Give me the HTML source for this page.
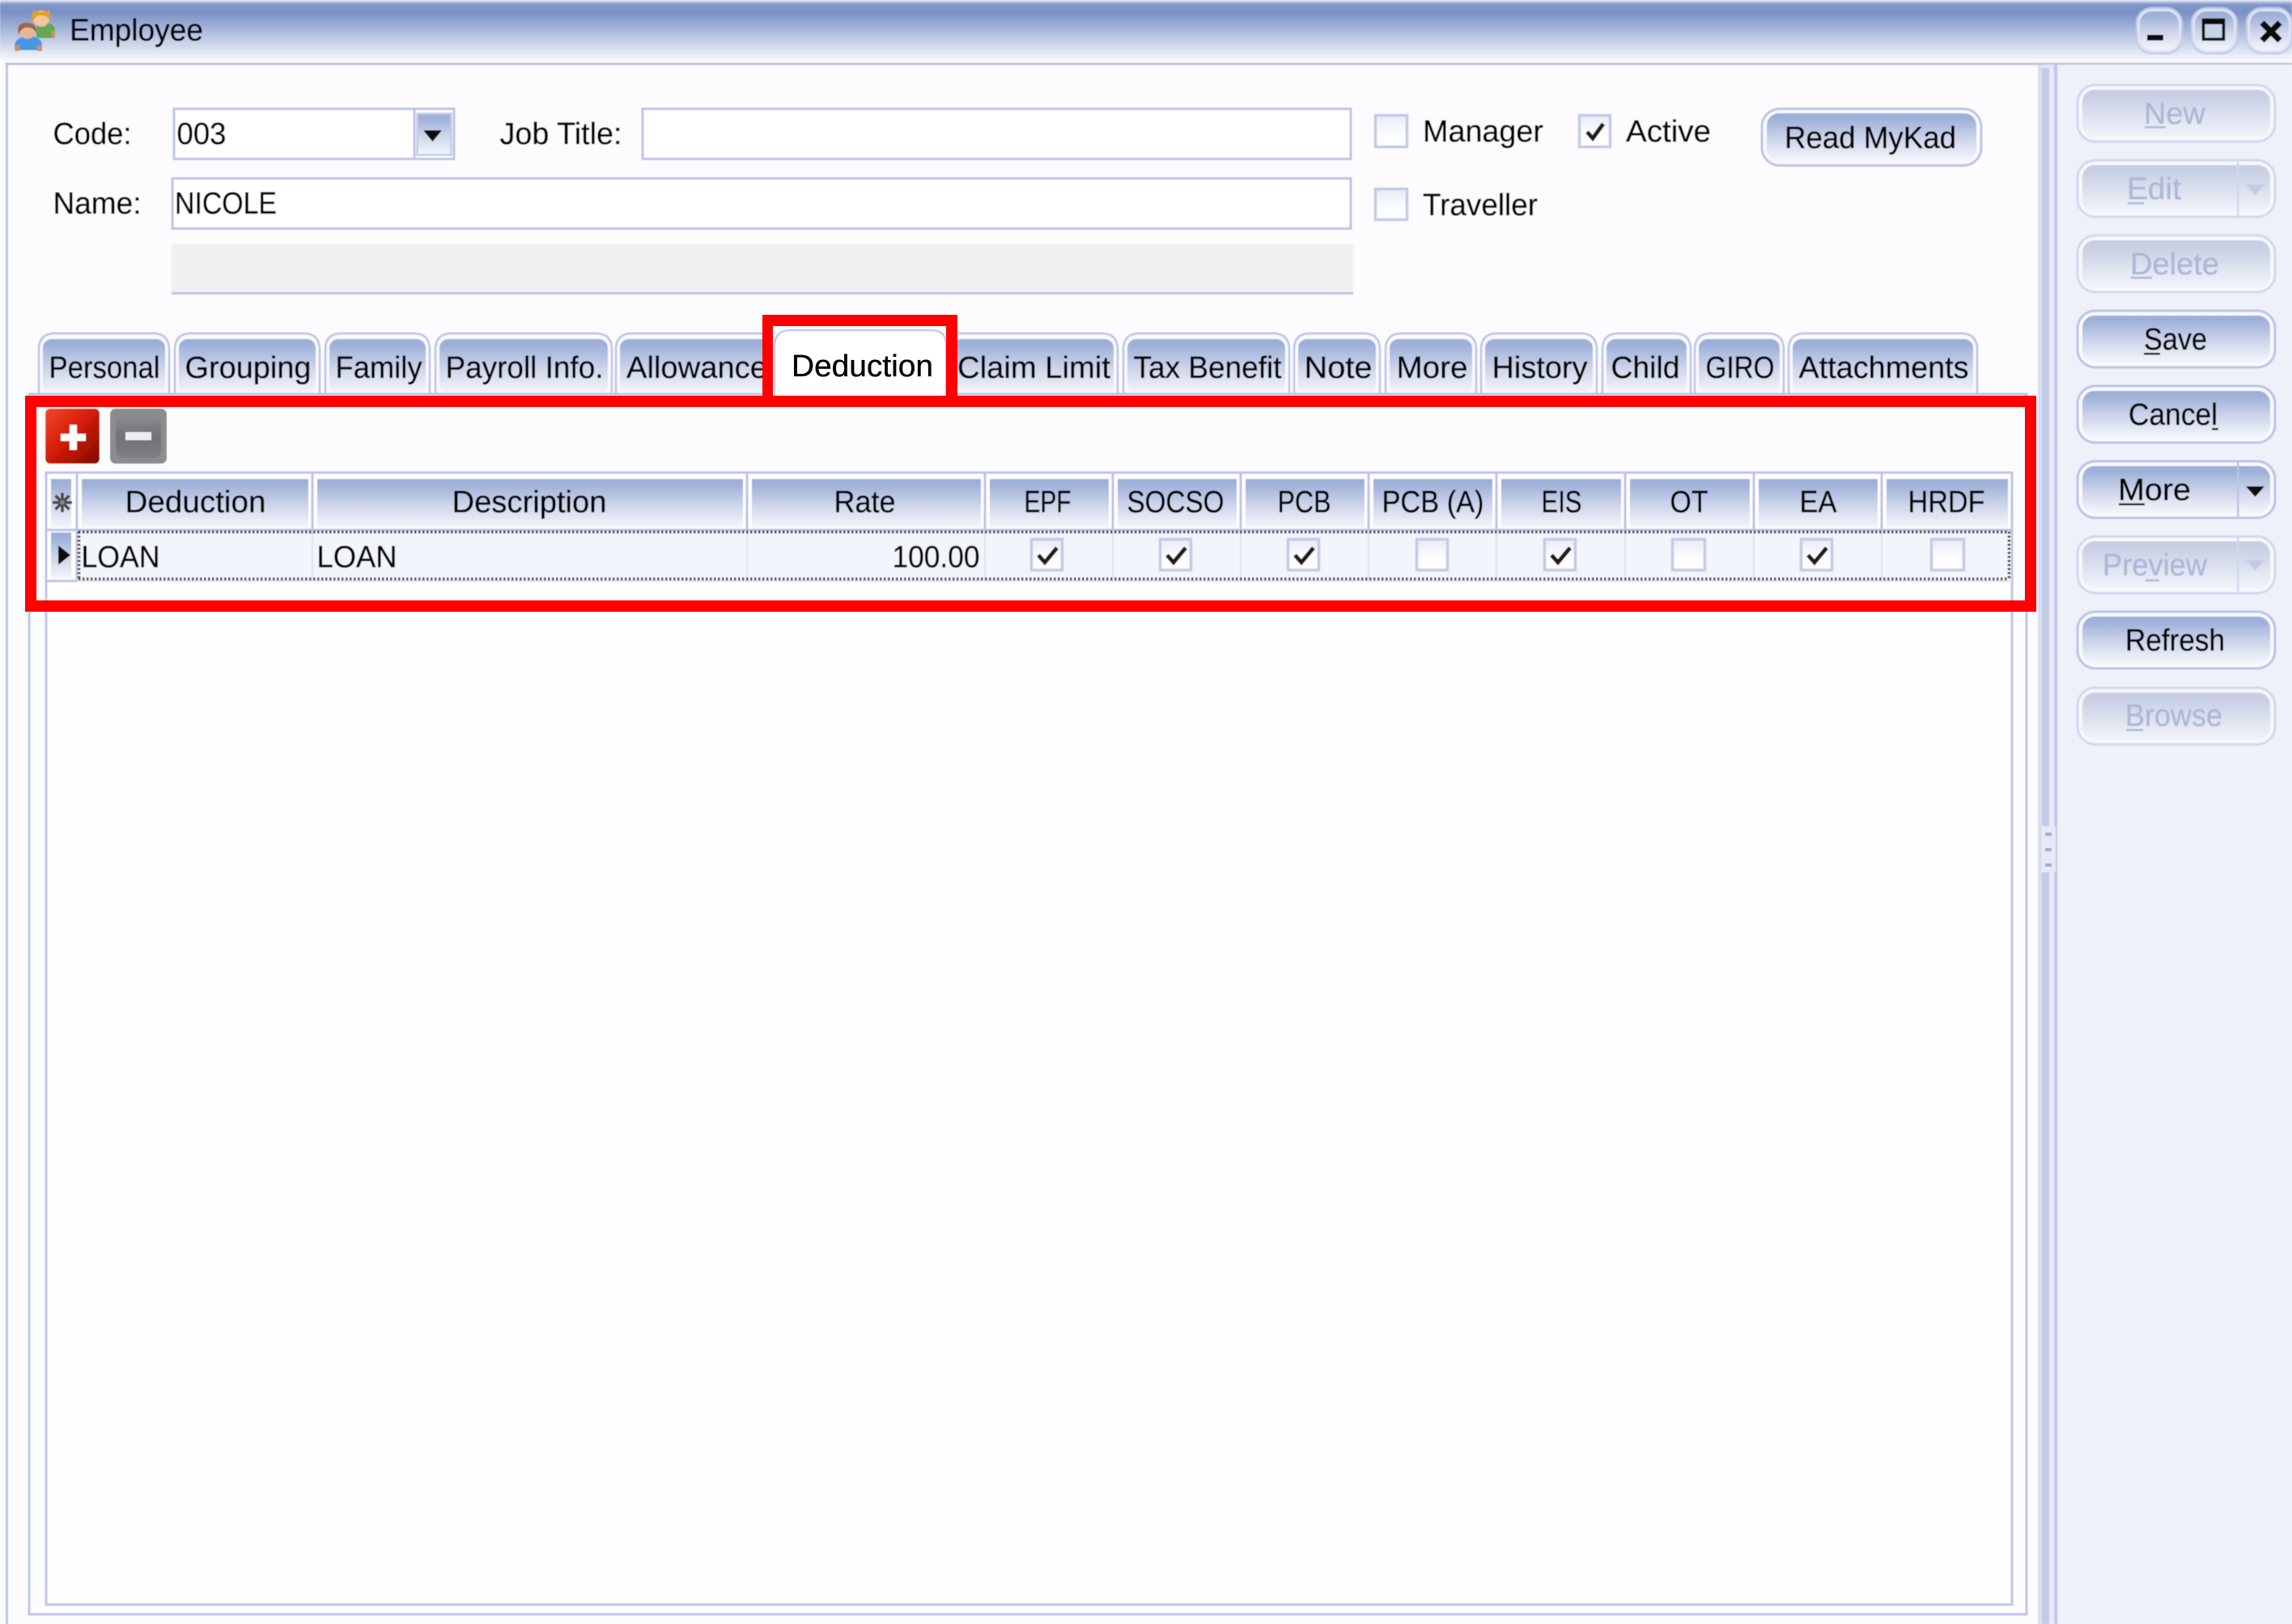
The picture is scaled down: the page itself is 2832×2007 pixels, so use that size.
<!DOCTYPE html>
<html lang="en">
<head>
<meta charset="utf-8">
<title>Employee</title>
<style>
html,body{margin:0;padding:0;background:#fcfcff;width:2832px;height:2007px;overflow:hidden}
svg{display:block}
text{font-family:"Liberation Sans",sans-serif;font-size:38px;fill:#000;stroke:#000;stroke-width:.35px}
.d{fill:#adb7d6;stroke:#adb7d6}
.c{fill:#fff;stroke:#c3cae8;stroke-width:3.5}
.k{fill:none;stroke:#1c1c1c;stroke-width:5}
.tb{fill:#f8f9fe;stroke:#bcc3e6;stroke-width:2.5}
.l{stroke:#bcc3e6;stroke-width:3;fill:none}
.f{stroke:#dde2f2;stroke-width:2;fill:none}
.dot{stroke:#333;stroke-width:3.5;stroke-dasharray:2.5 2.5;fill:none}
</style>
</head>
<body>
<svg xmlns="http://www.w3.org/2000/svg" width="2832" height="2007" viewBox="0 0 2832 2007">
<defs>
<linearGradient id="g" x1="0" y1="0" x2="0" y2="1"><stop offset="0" stop-color="#9dafd8"/><stop offset=".12" stop-color="#a0b1d9"/><stop offset=".55" stop-color="#ced6eb"/><stop offset="1" stop-color="#f4f6fb"/></linearGradient>
<linearGradient id="gd" x1="0" y1="0" x2="0" y2="1"><stop offset="0" stop-color="#c6cde2"/><stop offset=".15" stop-color="#c9d0e4"/><stop offset="1" stop-color="#f2f4fa"/></linearGradient>
<linearGradient id="tt" x1="0" y1="0" x2="0" y2="1"><stop offset="0" stop-color="#e6eaf4"/><stop offset=".07" stop-color="#8096c8"/><stop offset=".2" stop-color="#7b91c6"/><stop offset=".55" stop-color="#b5c2e0"/><stop offset=".95" stop-color="#f6f7fb"/><stop offset="1" stop-color="#fbfbfe"/></linearGradient>
<linearGradient id="cb" x1="0" y1="0" x2="0" y2="1"><stop offset="0" stop-color="#e9ecf7"/><stop offset=".6" stop-color="#fcfcff"/><stop offset="1" stop-color="#fff"/></linearGradient>
<linearGradient id="rd" x1="0" y1="0" x2="1" y2="1"><stop offset="0" stop-color="#f04a30"/><stop offset=".45" stop-color="#d81c08"/><stop offset="1" stop-color="#7e0a00"/></linearGradient>
<linearGradient id="gy" x1="0" y1="0" x2="0" y2="1"><stop offset="0" stop-color="#8b8d91"/><stop offset=".5" stop-color="#707276"/><stop offset="1" stop-color="#7e8084"/></linearGradient>
<filter id="b" x="0" y="0" width="100%" height="100%"><feGaussianBlur stdDeviation="0.55"/></filter>
<g id="bt"><rect x="2567" y="1" width="244" height="70" rx="22" fill="#f8f9fe" stroke="#bcc3e6" stroke-width="3"/><rect x="2573" y="7" width="232" height="58" rx="15" fill="url(#g)"/></g>
<g id="bd"><rect x="2567" y="1" width="244" height="70" rx="22" fill="#f6f7fc" stroke="#d2d7ee" stroke-width="3"/><rect x="2573" y="7" width="232" height="58" rx="15" fill="url(#gd)"/></g>
</defs>

<g filter="url(#b)">
<rect width="2832" height="2007" fill="#fcfcff"/>
<!-- Title bar -->
<rect width="2832" height="78" fill="url(#tt)"/>
<rect x="6" y="77.500" width="2826" height="3" fill="#bcc3e6"/>
<rect x="7" y="79" width="3" height="1928" fill="#bcc3e6"/>
<!-- Title icon -->
<path d="M45 47V34Q46 29 55 29H61Q68 31 68 38V47Z" fill="#63a94f"/>
<rect x="64" y="38" width="4" height="9" fill="#d09060"/>
<circle cx="51" cy="23" r="10" fill="#f2c79c"/>
<path d="M40 28Q38 13 44 13L50 15L60 13Q64 20 61 26Q60 19 50 19Q43 19 40 28Z" fill="#e2a11f"/>
<path d="M18 62V55Q20 47 30 45H40Q52 47 52 56V62Z" fill="#4597e8"/>
<circle cx="34" cy="38" r="10" fill="#e9b695"/>
<path d="M23 43Q19 28 33 28Q46 28 45 41Q41 33 32 34Q26 35 23 43Z" fill="#98694c"/>
<rect x="18" y="56" width="6" height="7" fill="#d09060"/><rect x="46" y="56" width="6" height="7" fill="#d09060"/>
<text x="86" y="50" textLength="165" lengthAdjust="spacingAndGlyphs">Employee</text>

<!-- Window controls -->
<rect x="2640" y="10" width="56" height="56" rx="19" fill="#dfe4f2" stroke="#c5cbe8" stroke-width="2.500"/>
<rect x="2708" y="10" width="56" height="56" rx="19" fill="#dfe4f2" stroke="#c5cbe8" stroke-width="2.500"/>
<rect x="2776" y="10" width="56" height="56" rx="19" fill="#dfe4f2" stroke="#c5cbe8" stroke-width="2.500"/>
<rect x="2644" y="14" width="48" height="48" rx="15" fill="url(#g)"/>
<rect x="2712" y="14" width="48" height="48" rx="15" fill="url(#g)"/>
<rect x="2780" y="14" width="48" height="48" rx="15" fill="url(#g)"/>
<rect x="2653" y="43" width="20" height="7" fill="#111"/>
<rect x="2722.500" y="24.500" width="25" height="24" fill="#c6d1ea" stroke="#111" stroke-width="3.500"/>
<rect x="2721" y="23" width="28" height="7" fill="#111"/>
<path d="M2795 28L2817 50M2817 28L2795 50" stroke="#111" stroke-width="7.500" fill="none"/>

<!-- Fields -->
<rect x="215" y="134.500" width="346" height="62" fill="#fff" stroke="#bcc3e6" stroke-width="3"/>
<path d="M512 134V197" class="l"/>
<rect x="515.500" y="140.500" width="42" height="51" fill="url(#g)" stroke="#c3cae8" stroke-width="2.500"/>
<path d="M523 161H546L534.500 175Z" fill="#111"/>
<text x="65.500" y="178" textLength="97" lengthAdjust="spacingAndGlyphs">Code:</text>
<text x="218.500" y="178" textLength="61" lengthAdjust="spacingAndGlyphs">003</text>
<text x="617.500" y="178" textLength="151" lengthAdjust="spacingAndGlyphs">Job Title:</text>
<rect x="794" y="134.500" width="875" height="62" fill="#fff" stroke="#bcc3e6" stroke-width="3"/>
<rect x="213" y="220.500" width="1456" height="62" fill="#fff" stroke="#bcc3e6" stroke-width="3"/>
<text x="65.500" y="264" textLength="109" lengthAdjust="spacingAndGlyphs">Name:</text>
<text x="216" y="264" textLength="126" lengthAdjust="spacingAndGlyphs">NICOLE</text>
<rect x="212" y="302" width="1460" height="60" fill="#f0f0f0"/>
<rect x="212" y="361" width="1460" height="3" fill="#bcc3e6"/>

<!-- Checkboxes top -->
<rect x="1699.500" y="142.500" width="39" height="39" class="c" style="fill:url(#cb)"/>
<text x="1758" y="175" textLength="149" lengthAdjust="spacingAndGlyphs">Manager</text>
<rect x="1951.500" y="142.500" width="38" height="39" class="c" style="fill:url(#cb)"/>
<path d="M1961 163L1968 171L1981 153" class="k"/>
<text x="2009" y="175" textLength="105" lengthAdjust="spacingAndGlyphs">Active</text>
<rect x="1699.500" y="233.500" width="39" height="38" class="c" style="fill:url(#cb)"/>
<text x="1758" y="266" textLength="142" lengthAdjust="spacingAndGlyphs">Traveller</text>

<!-- Read MyKad -->
<rect x="2177" y="134.500" width="271" height="70" rx="22" fill="#f8f9fe" stroke="#bcc3e6" stroke-width="3"/>
<rect x="2183" y="140" width="259" height="59" rx="15" fill="url(#g)"/>
<text x="2205" y="183" textLength="212" lengthAdjust="spacingAndGlyphs">Read MyKad</text>

<!-- Splitter and right panel -->
<rect x="2543" y="80" width="289" height="1927" fill="#eef1fa"/>
<rect x="2518" y="80" width="25" height="1927" fill="#e4e8f5"/>
<rect x="2519" y="80" width="3" height="1927" fill="#d3d8ee"/>
<rect x="2523" y="84" width="9" height="1923" fill="#c1cbe5"/>
<rect x="2532" y="84" width="5" height="1923" fill="#e8ebf6"/>
<rect x="2538" y="80" width="4" height="1927" fill="#c1cbe5"/>
<rect x="2522" y="1021" width="18" height="57" fill="#e7eaf6"/>
<rect x="2527" y="1029" width="8" height="4" fill="#9ea6d2"/>
<rect x="2527" y="1048" width="8" height="4" fill="#9ea6d2"/>
<rect x="2527" y="1067" width="8" height="4" fill="#9ea6d2"/>

<!-- Side buttons -->
<use href="#bd" y="104"/>
<text class="d" x="2649" y="153" textLength="76" lengthAdjust="spacingAndGlyphs">New</text><rect x="2650" y="156" width="26" height="2.500" fill="#adb7d6"/>
<use href="#bd" y="197"/>
<rect x="2764" y="197" width="2.500" height="71" fill="#d2d7ee"/>
<text class="d" x="2628" y="246" textLength="67" lengthAdjust="spacingAndGlyphs">Edit</text><rect x="2629" y="250" width="20" height="2.500" fill="#adb7d6"/>
<path d="M2775 228H2798L2786.500 241Z" fill="#c3cae2"/>
<use href="#bd" y="290"/>
<text class="d" x="2632" y="339" textLength="110" lengthAdjust="spacingAndGlyphs">Delete</text><rect x="2633" y="342" width="26" height="2.500" fill="#adb7d6"/>
<use href="#bt" y="383"/>
<text x="2649" y="432" textLength="78" lengthAdjust="spacingAndGlyphs">Save</text><rect x="2649" y="436" width="20" height="2.500" fill="#141414"/>
<use href="#bt" y="476"/>
<text x="2630" y="525" textLength="110" lengthAdjust="spacingAndGlyphs">Cancel</text><rect x="2733" y="529" width="8" height="2.500" fill="#141414"/>
<use href="#bt" y="569"/>
<rect x="2764" y="569" width="2.500" height="72" fill="#bcc3e6"/>
<text x="2617" y="618" textLength="90" lengthAdjust="spacingAndGlyphs">More</text><rect x="2618" y="622" width="32" height="2.500" fill="#141414"/>
<path d="M2775 601H2798L2786.500 614Z" fill="#111"/>
<use href="#bd" y="662"/>
<rect x="2764" y="662" width="2.500" height="71" fill="#d2d7ee"/>
<text class="d" x="2598" y="711" textLength="129" lengthAdjust="spacingAndGlyphs">Preview</text><rect x="2651" y="716" width="17" height="2.500" fill="#adb7d6"/>
<path d="M2775 692H2798L2786.500 705Z" fill="#c3cae2"/>
<use href="#bt" y="755"/>
<text x="2626" y="804" textLength="123" lengthAdjust="spacingAndGlyphs">Refresh</text>
<use href="#bd" y="849"/>
<text class="d" x="2626" y="897" textLength="120" lengthAdjust="spacingAndGlyphs">Browse</text><rect x="2627" y="901" width="21" height="2.500" fill="#adb7d6"/>

<!-- Tabs -->
<path class="tb" d="M48 487V432Q48 412 68 412H189Q209 412 209 432V487"/><rect x="53" y="419" width="151" height="67" rx="11" fill="url(#g)"/>
<path class="tb" d="M216 487V432Q216 412 236 412H375Q395 412 395 432V487"/><rect x="221" y="419" width="169" height="67" rx="11" fill="url(#g)"/>
<path class="tb" d="M402 487V432Q402 412 422 412H511Q531 412 531 432V487"/><rect x="407" y="419" width="119" height="67" rx="11" fill="url(#g)"/>
<path class="tb" d="M538 487V432Q538 412 558 412H736Q756 412 756 432V487"/><rect x="543" y="419" width="208" height="67" rx="11" fill="url(#g)"/>
<path class="tb" d="M761 487V432Q761 412 781 412H950V487"/><rect x="766" y="419" width="190" height="67" rx="11" fill="url(#g)"/>
<path class="tb" d="M1175 487V412H1361Q1381 412 1381 432V487"/><rect x="1175" y="419" width="201" height="67" rx="11" fill="url(#g)"/>
<path class="tb" d="M1388 487V432Q1388 412 1408 412H1573Q1593 412 1593 432V487"/><rect x="1393" y="419" width="195" height="67" rx="11" fill="url(#g)"/>
<path class="tb" d="M1599 487V432Q1599 412 1619 412H1685Q1705 412 1705 432V487"/><rect x="1604" y="419" width="96" height="67" rx="11" fill="url(#g)"/>
<path class="tb" d="M1712 487V432Q1712 412 1732 412H1804Q1824 412 1824 432V487"/><rect x="1717" y="419" width="102" height="67" rx="11" fill="url(#g)"/>
<path class="tb" d="M1830 487V432Q1830 412 1850 412H1953Q1973 412 1973 432V487"/><rect x="1835" y="419" width="133" height="67" rx="11" fill="url(#g)"/>
<path class="tb" d="M1980 487V432Q1980 412 2000 412H2069Q2089 412 2089 432V487"/><rect x="1985" y="419" width="99" height="67" rx="11" fill="url(#g)"/>
<path class="tb" d="M2094 487V432Q2094 412 2114 412H2184Q2204 412 2204 432V487"/><rect x="2099" y="419" width="100" height="67" rx="11" fill="url(#g)"/>
<path class="tb" d="M2210 487V432Q2210 412 2230 412H2423Q2443 412 2443 432V487"/><rect x="2215" y="419" width="223" height="67" rx="11" fill="url(#g)"/>

<text x="60.500" y="467" textLength="137" lengthAdjust="spacingAndGlyphs">Personal</text>
<text x="228.500" y="467" textLength="156" lengthAdjust="spacingAndGlyphs">Grouping</text>
<text x="414.500" y="467" textLength="107" lengthAdjust="spacingAndGlyphs">Family</text>
<text x="550.500" y="467" textLength="195" lengthAdjust="spacingAndGlyphs">Payroll Info.</text>
<text x="774" y="467" textLength="174" lengthAdjust="spacingAndGlyphs">Allowance</text>
<text x="1183" y="467" textLength="189" lengthAdjust="spacingAndGlyphs">Claim Limit</text>
<text x="1400.500" y="467" textLength="183" lengthAdjust="spacingAndGlyphs">Tax Benefit</text>
<text x="1611.500" y="467" textLength="84" lengthAdjust="spacingAndGlyphs">Note</text>
<text x="1725.500" y="467" textLength="88" lengthAdjust="spacingAndGlyphs">More</text>
<text x="1843.500" y="467" textLength="118" lengthAdjust="spacingAndGlyphs">History</text>
<text x="1990.500" y="467" textLength="85" lengthAdjust="spacingAndGlyphs">Child</text>
<text x="2107.500" y="467" textLength="85" lengthAdjust="spacingAndGlyphs">GIRO</text>
<text x="2222.500" y="467" textLength="210" lengthAdjust="spacingAndGlyphs">Attachments</text>

<!-- Tab panel -->
<rect x="36" y="487" width="2468" height="1508" fill="#fcfcff" stroke="#bcc3e6" stroke-width="3"/>
<!-- Grid -->
<rect x="57" y="584" width="2429" height="1399" fill="#fefefe" stroke="#bcc3e6" stroke-width="3"/>
<rect x="63" y="592" width="25" height="60" fill="url(#g)"/>
<rect x="101" y="592" width="280" height="60" fill="url(#g)"/>
<rect x="392" y="592" width="526" height="60" fill="url(#g)"/>
<rect x="929" y="592" width="283" height="60" fill="url(#g)"/>
<rect x="1223" y="592" width="147" height="60" fill="url(#g)"/>
<rect x="1381" y="592" width="147" height="60" fill="url(#g)"/>
<rect x="1539" y="592" width="147" height="60" fill="url(#g)"/>
<rect x="1697" y="592" width="147" height="60" fill="url(#g)"/>
<rect x="1855" y="592" width="148" height="60" fill="url(#g)"/>
<rect x="2014" y="592" width="148" height="60" fill="url(#g)"/>
<rect x="2173" y="592" width="147" height="60" fill="url(#g)"/>
<rect x="2331" y="592" width="150" height="60" fill="url(#g)"/>
<path class="l" d="M95 584V718M386 584V655M923 584V655M1217 584V655M1375 584V655M1533 584V655M1691 584V655M1849 584V655M2008 584V655M2167 584V655M2325 584V655"/>
<path class="l" d="M57 655H2486" />
<!-- Row -->
<rect x="96" y="657" width="2389" height="59" fill="#f2f5fb"/>
<path class="f" d="M386 657V716M923 657V716M1217 657V716M1375 657V716M1533 657V716M1691 657V716M1849 657V716M2008 657V716M2167 657V716M2325 657V716"/>
<rect x="63" y="658" width="25" height="57" fill="url(#g)"/>
<path d="M72 674L87 686L72 698Z" fill="#111"/>
<path class="l" d="M57 718H95"/>
<path class="f" d="M95 718H2486"/>
<path class="dot" d="M97 657.500H2482M97 715.500H2482M97.500 657V716M2482.500 657V716"/>
<g stroke="#444" stroke-width="3.500" fill="none"><path d="M77 609V633M65 621H89M68.500 612.500L85.500 629.500M85.500 612.500L68.500 629.500"/></g>
<circle cx="77" cy="621" r="3" fill="#888"/>

<text x="154.500" y="633" textLength="174" lengthAdjust="spacingAndGlyphs">Deduction</text>
<text x="558.500" y="633" textLength="191" lengthAdjust="spacingAndGlyphs">Description</text>
<text x="1030.500" y="633" textLength="76" lengthAdjust="spacingAndGlyphs">Rate</text>
<text x="1265.500" y="633" textLength="58" lengthAdjust="spacingAndGlyphs">EPF</text>
<text x="1392.500" y="633" textLength="120" lengthAdjust="spacingAndGlyphs">SOCSO</text>
<text x="1578.500" y="633" textLength="66" lengthAdjust="spacingAndGlyphs">PCB</text>
<text x="1707.500" y="633" textLength="126" lengthAdjust="spacingAndGlyphs">PCB (A)</text>
<text x="1904.500" y="633" textLength="50" lengthAdjust="spacingAndGlyphs">EIS</text>
<text x="2063.500" y="633" textLength="47" lengthAdjust="spacingAndGlyphs">OT</text>
<text x="2223.500" y="633" textLength="46" lengthAdjust="spacingAndGlyphs">EA</text>
<text x="2357.500" y="633" textLength="95" lengthAdjust="spacingAndGlyphs">HRDF</text>
<text x="100.500" y="701" textLength="97" lengthAdjust="spacingAndGlyphs">LOAN</text>
<text x="391.500" y="701" textLength="99" lengthAdjust="spacingAndGlyphs">LOAN</text>
<text x="1102.500" y="701" textLength="108" lengthAdjust="spacingAndGlyphs">100.00</text>

<!-- Row checkboxes -->
<rect x="1274.500" y="666.500" width="38" height="38" class="c" style="fill:url(#cb)"/><path class="k" d="M1283 686L1291 695L1306 677"/>
<rect x="1433.500" y="666.500" width="38" height="38" class="c" style="fill:url(#cb)"/><path class="k" d="M1442 686L1450 695L1465 677"/>
<rect x="1591.500" y="666.500" width="38" height="38" class="c" style="fill:url(#cb)"/><path class="k" d="M1600 686L1608 695L1623 677"/>
<rect x="1750.500" y="666.500" width="38" height="38" class="c" style="fill:url(#cb)"/>
<rect x="1908.500" y="666.500" width="38" height="38" class="c" style="fill:url(#cb)"/><path class="k" d="M1917 686L1925 695L1940 677"/>
<rect x="2066.500" y="666.500" width="40" height="38" class="c" style="fill:url(#cb)"/>
<rect x="2225.500" y="666.500" width="38" height="38" class="c" style="fill:url(#cb)"/><path class="k" d="M2234 686L2242 695L2257 677"/>
<rect x="2386.500" y="666.500" width="40" height="38" class="c" style="fill:url(#cb)"/>

<!-- Toolbar icons -->
<rect x="56" y="505" width="67" height="68" rx="6" fill="url(#rd)"/>
<rect x="75" y="536" width="31" height="9" fill="#fff"/><rect x="86" y="525" width="9" height="31" fill="#fff"/>
<rect x="136" y="505" width="70" height="68" rx="7" fill="#8a8c90"/>
<rect x="143" y="512" width="56" height="54" rx="10" fill="url(#gy)"/>
<rect x="155" y="534" width="32" height="10" fill="#eceef2"/>
</g>

<!-- Active tab and red highlight -->
<rect x="955" y="403" width="214" height="86" fill="#fff"/>
<path d="M957 489V428Q957 408 977 408H1150Q1169 408 1169 426V489" fill="#fff" stroke="#c5cbe8" stroke-width="2.500"/>
<text x="978" y="465" textLength="175" lengthAdjust="spacingAndGlyphs">Deduction</text>
<path fill="#ff0000" fill-rule="evenodd" d="M942 389H1183V489H2516V756H31V489H942ZM955 403V489H1169V403ZM45 503V742H2502V503Z"/>
</svg>
</body>
</html>
